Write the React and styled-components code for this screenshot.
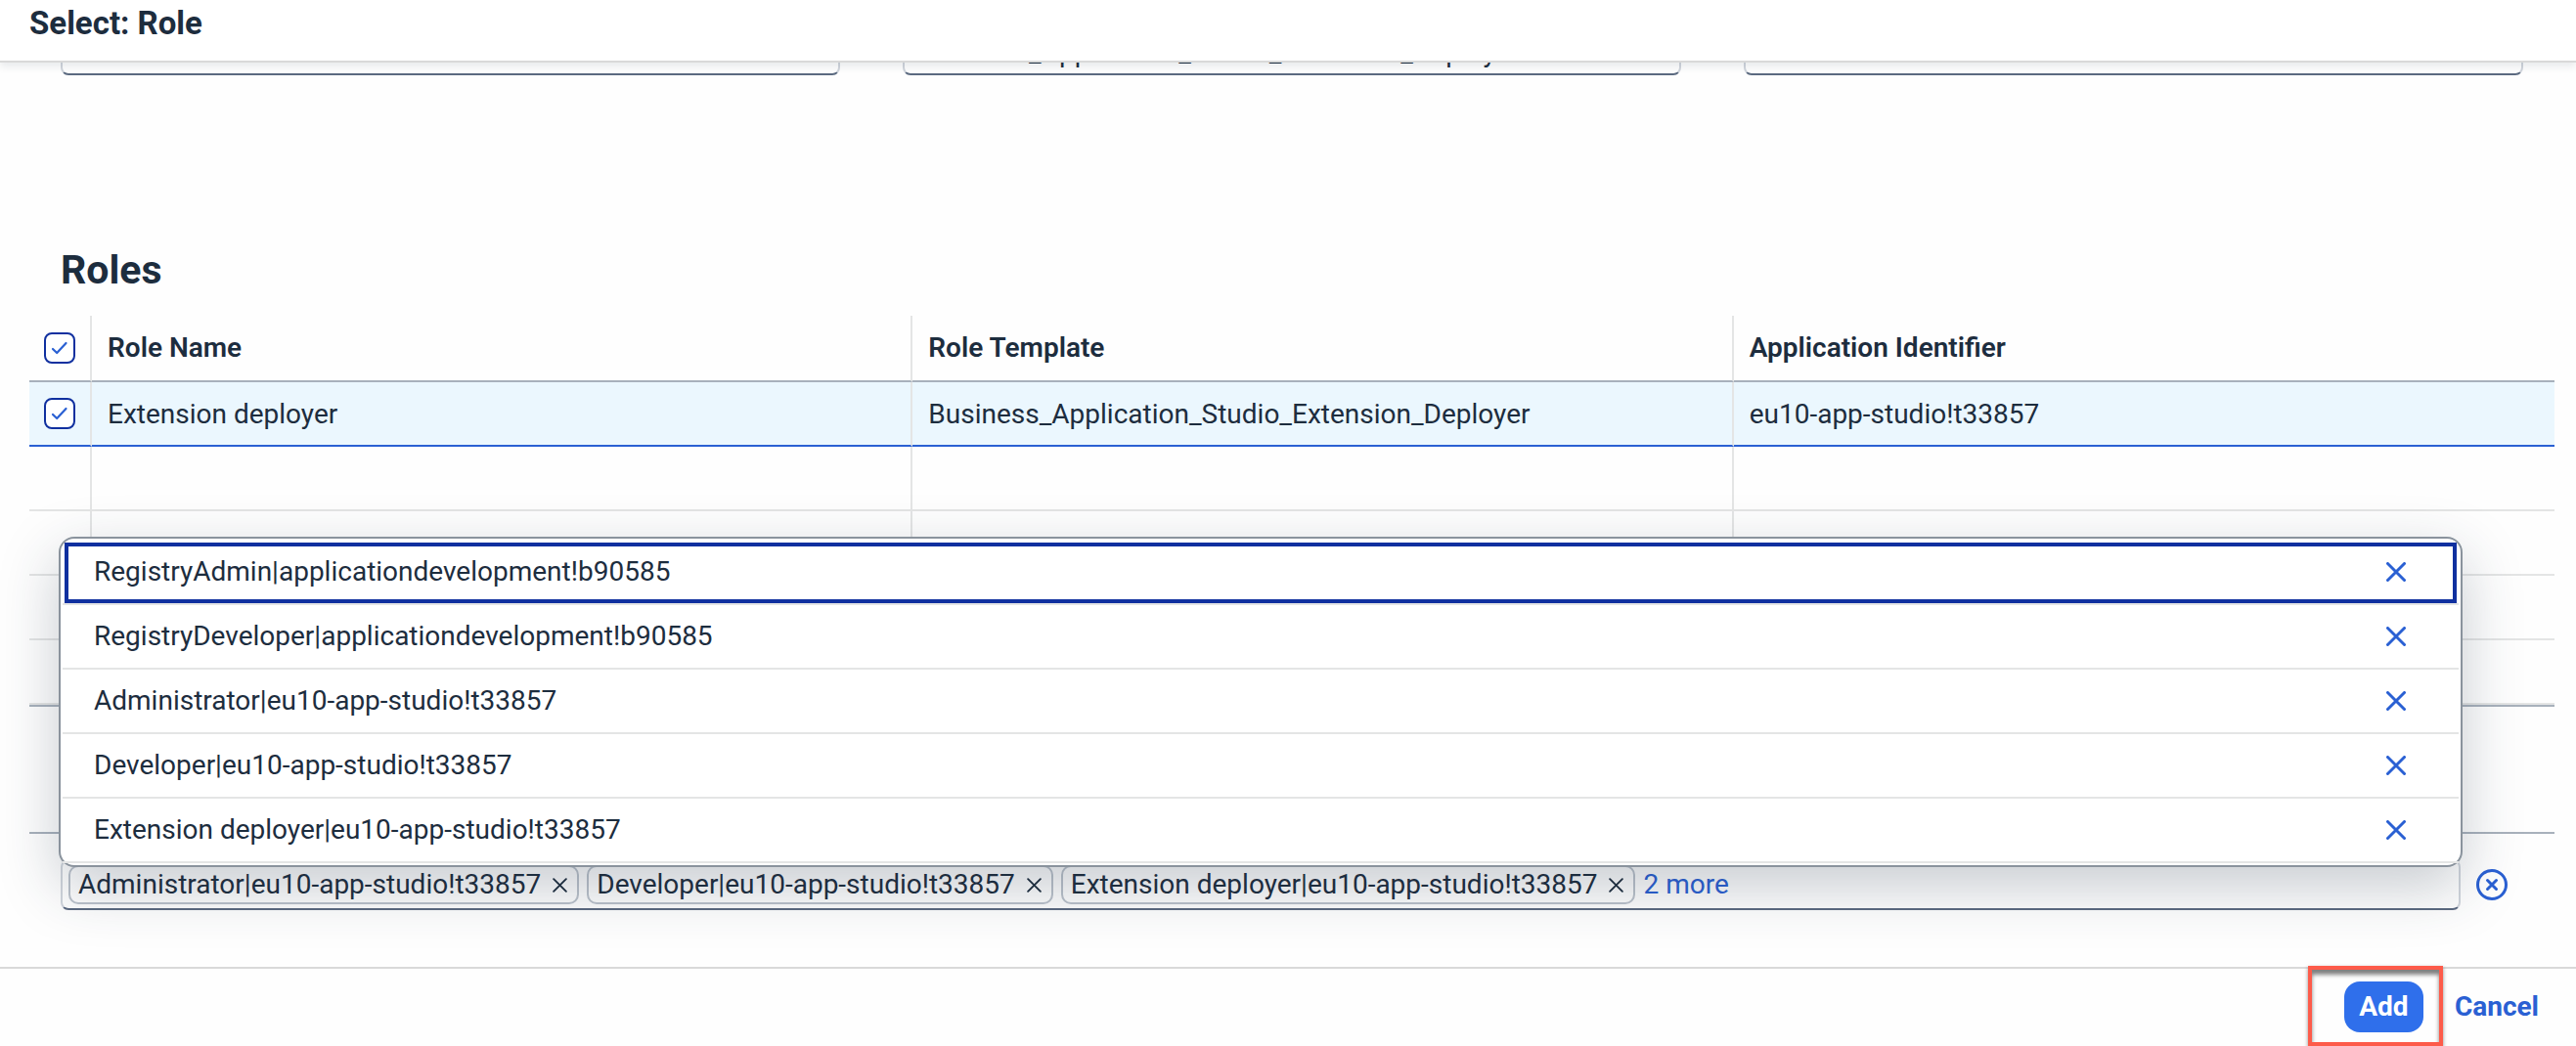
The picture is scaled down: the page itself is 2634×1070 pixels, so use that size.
import React, { useState } from "react";
import styled, { createGlobalStyle, css } from "styled-components";

const color = {
  text: "#1d2d3e",
  link: "#2a60d3",
  focus: "#10309f",
  line: "#e4e5e5",
  strongLine: "#a8b1bc",
  field: "#5b6a80",
};

const Global = createGlobalStyle`
  *, *::before, *::after { box-sizing: border-box; }
  body {
    margin: 0;
    background: #fefefe;
    color: ${color.text};
    font-family: Roboto, "Liberation Sans", sans-serif;
    font-size: 28px;
    line-height: 32px;
  }
  button, input { font: inherit; color: inherit; }
`;

const Dialog = styled.div`
  display: flex;
  flex-direction: column;
  min-height: 100vh;
`;

const Header = styled.header`
  position: relative;
  z-index: 1;
  height: 64px;
  padding: 4px 30px;
  background: #fff;
  border-bottom: 2px solid #d9d9d9;
  box-shadow: 0 4px 8px rgba(34, 53, 72, 0.1);
`;

const DialogTitle = styled.h1`
  margin: 0;
  font-size: 33px;
  line-height: 40px;
  font-weight: 700;
`;

const Body = styled.main`
  flex: 1;
  overflow: hidden;
`;

const FilterRow = styled.div`
  display: grid;
  grid-template-columns: repeat(3, 1fr);
  gap: 64px;
  margin-top: -39px;
  padding: 0 54px 0 62px;
`;

const fieldFrame = css`
  height: 52px;
  border: 2px solid #d0d5dc;
  border-bottom-color: ${color.field};
  border-radius: 8px;
  background: transparent;
`;

const Field = styled.input`
  ${fieldFrame}
  width: 100%;
  min-width: 0;
  padding: 4px 14px 0;
`;

const SectionTitle = styled.h2`
  margin: 175px 62px 23px;
  font-size: 41px;
  line-height: 48px;
  font-weight: 700;
`;

const TableArea = styled.section`
  padding: 0 22px 0 30px;
`;

const Table = styled.table`
  width: 100%;
  table-layout: fixed;
  border-collapse: separate;
  border-spacing: 0;
  border-bottom: 2px solid ${color.strongLine};
`;

const SelectCol = styled.col`
  width: 64px;
`;

const Row = styled.tr`
  height: 66px;
  background: ${(p) => (p.$selected ? "#ebf7fe" : "transparent")};
  td {
    border-bottom: 2px solid ${(p) => (p.$selected ? color.link : color.line)};
  }
`;

const HeadCell = styled.th`
  height: 68px;
  padding: 0 16px;
  text-align: left;
  font-weight: 600;
  border-bottom: 2px solid ${color.strongLine};
  border-right: 2px solid ${color.line};
  &:last-child { border-right: 0; }
`;

const Cell = styled.td`
  padding: ${(p) => (p.$text ? "2px 16px 0" : "0 16px")};
  border-right: 2px solid ${color.line};
  &:last-child { border-right: 0; }
`;

const Tick = styled.label`
  display: grid;
  place-items: center;
  margin: 0 -16px;
  > * { grid-area: 1 / 1; }
  svg { pointer-events: none; }
`;

const TickInput = styled.input`
  appearance: none;
  width: 32px;
  height: 32px;
  margin: 0;
  border: 2px solid ${color.focus};
  border-radius: 8px;
  background: #fff;
  &:not(:checked) + svg { visibility: hidden; }
`;

const TableFooter = styled.div`
  height: 130px;
  border-bottom: 2px solid ${color.strongLine};
`;

const SelectionRow = styled.div`
  display: flex;
  align-items: center;
  padding: 26px 54px 58px 62px;
`;

const TokenAnchor = styled.div`
  position: relative;
  flex: 1;
  min-width: 0;
`;

const TokenField = styled.div`
  ${fieldFrame}
  display: flex;
  align-items: center;
  gap: 8px;
  padding: 0 6px;
`;

const Token = styled.span`
  display: flex;
  align-items: center;
  gap: 12px;
  height: 40px;
  padding: 0 10px 0 8px;
  border: 2px solid #bcc3cc;
  border-radius: 10px;
  white-space: nowrap;
`;

const IconButton = styled.button`
  display: grid;
  place-items: center;
  flex: none;
  width: ${(p) => p.$width}px;
  height: ${(p) => p.$height}px;
  padding: 0;
  border: 0;
  background: none;
  color: ${(p) => (p.$plain ? color.text : color.link)};
`;

const MoreLink = styled.a`
  color: ${color.link};
  text-decoration: none;
  white-space: nowrap;
`;

const Popover = styled.ul`
  position: absolute;
  left: -2px;
  right: -2px;
  bottom: 44px;
  margin: 0;
  padding: 2px;
  list-style: none;
  background: #fff;
  border: 2px solid #8a939d;
  border-radius: 16px;
  box-shadow: 0 20px 60px rgba(34, 53, 72, 0.25);
`;

const PopoverItem = styled.li`
  display: flex;
  align-items: center;
  justify-content: space-between;
  height: 66px;
  padding: 0 32px;
  border-bottom: 2px solid ${color.line};
  ${(p) =>
    p.$focused &&
    css`
      outline: 4px solid ${color.focus};
      outline-offset: -6px;
    `}
`;

const Footer = styled.footer`
  display: flex;
  justify-content: flex-end;
  align-items: flex-start;
  height: 81px;
  padding: 0 26px 0 0;
  border-top: 2px solid #d9d9d9;
`;

const Highlight = styled.div`
  height: 82px;
  margin-top: -3px;
  padding: 12px 16px 0 33px;
  border: 4px solid #fd5b4a;
  box-shadow: 0 2px 4px rgba(0, 0, 0, 0.45), inset 0 5px 4px rgba(0, 0, 0, 0.5);
`;

const Button = styled.button`
  height: 52px;
  min-width: 81px;
  padding: 0 12px;
  border: 0;
  border-radius: 16px;
  font-weight: 700;
  background: ${(p) => (p.$primary ? "#2f6feb" : "transparent")};
  color: ${(p) => (p.$primary ? "#fff" : color.link)};
`;

const CancelSlot = styled.div`
  padding-top: 13px;
`;

const Cross = ({ size, stroke }) => (
  <svg width={size} height={size} viewBox="0 0 20 20" fill="none" stroke="currentColor" strokeWidth={stroke} strokeLinecap="round" aria-hidden="true">
    <path d="M1.5 1.5 18.5 18.5M18.5 1.5 1.5 18.5" />
  </svg>
);

const ClearIcon = () => (
  <svg width="32" height="32" viewBox="0 0 32 32" fill="none" stroke="currentColor" strokeWidth="3" strokeLinecap="round" aria-hidden="true">
    <circle cx="16" cy="16" r="14.5" />
    <path d="M11.5 11.5 20.5 20.5M20.5 11.5 11.5 20.5" />
  </svg>
);

function CheckBox({ label }) {
  const [checked, setChecked] = useState(true);
  return (
    <Tick>
      <TickInput type="checkbox" aria-label={label} checked={checked} onChange={() => setChecked(!checked)} />
      <svg width="18" height="14" viewBox="0 0 18 14" fill="none" stroke={color.link} strokeWidth="2.2" strokeLinecap="round" strokeLinejoin="round" aria-hidden="true">
        <path d="M2 8 6.2 12 15.5 2" />
      </svg>
    </Tick>
  );
}

const columns = ["Role Name", "Role Template", "Application Identifier"];
const rows = [
  ["Extension deployer", "Business_Application_Studio_Extension_Deployer", "eu10-app-studio!t33857"],
  null,
  null,
  null,
  null,
];
const filters = [
  { label: "Role Name", value: "" },
  { label: "Role Template", value: "Business_Application_Studio_Extension_Deployer" },
  { label: "Application Identifier", value: "" },
];
const tokens = [
  "Administrator|eu10-app-studio!t33857",
  "Developer|eu10-app-studio!t33857",
  "Extension deployer|eu10-app-studio!t33857",
];
const selected = [
  "RegistryAdmin|applicationdevelopment!b90585",
  "RegistryDeveloper|applicationdevelopment!b90585",
  ...tokens,
];

export default function App() {
  return (
    <Dialog>
      <Global />
      <Header>
        <DialogTitle>Select: Role</DialogTitle>
      </Header>
      <Body>
        <FilterRow>
          {filters.map((f) => (
            <Field key={f.label} aria-label={f.label} defaultValue={f.value} />
          ))}
        </FilterRow>
        <SectionTitle>Roles</SectionTitle>
        <TableArea>
          <Table>
            <colgroup>
              <SelectCol />
              <col />
              <col />
              <col />
            </colgroup>
            <thead>
              <tr>
                <HeadCell>
                  <CheckBox label="Select all roles" />
                </HeadCell>
                {columns.map((c) => (
                  <HeadCell key={c}>{c}</HeadCell>
                ))}
              </tr>
            </thead>
            <tbody>
              {rows.map((r, i) => (
                <Row key={i} $selected={!!r}>
                  <Cell>{r && <CheckBox label={"Select " + r[0]} />}</Cell>
                  {columns.map((c, j) => (
                    <Cell key={c} $text>{r && r[j]}</Cell>
                  ))}
                </Row>
              ))}
            </tbody>
          </Table>
          <TableFooter />
        </TableArea>
        <SelectionRow>
          <TokenAnchor>
            <TokenField>
              {tokens.map((t) => (
                <Token key={t}>
                  {t}
                  <IconButton $width={15} $height={16} $plain aria-label={"Remove " + t}>
                    <Cross size={15} stroke={2.5} />
                  </IconButton>
                </Token>
              ))}
              <MoreLink href="#more">2 more</MoreLink>
            </TokenField>
            <Popover>
              {selected.map((s, i) => (
                <PopoverItem key={s} $focused={i === 0}>
                  {s}
                  <IconButton $width={64} $height={52} aria-label={"Remove " + s}>
                    <Cross size={20} stroke={3} />
                  </IconButton>
                </PopoverItem>
              ))}
            </Popover>
          </TokenAnchor>
          <IconButton $width={64} $height={52} aria-label="Clear selection">
            <ClearIcon />
          </IconButton>
        </SelectionRow>
      </Body>
      <Footer>
        <Highlight>
          <Button $primary>Add</Button>
        </Highlight>
        <CancelSlot>
          <Button>Cancel</Button>
        </CancelSlot>
      </Footer>
    </Dialog>
  );
}
